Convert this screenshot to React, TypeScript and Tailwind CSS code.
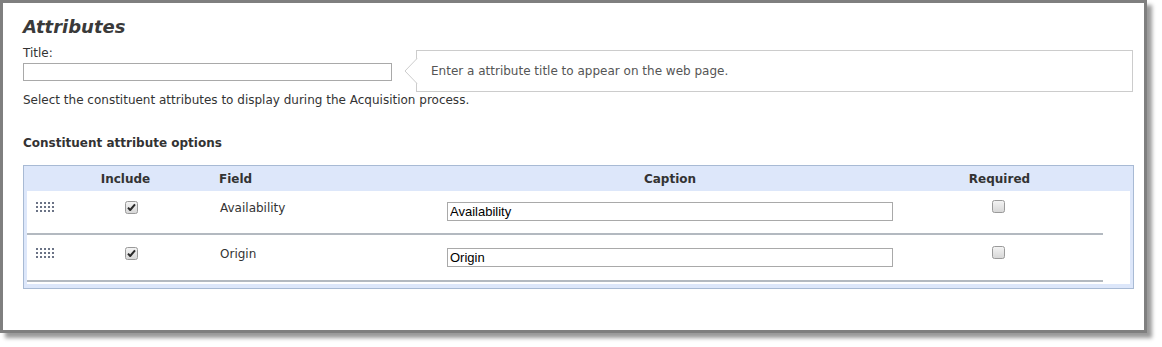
import React from "react"

const verdana = { fontFamily: '"DejaVu Sans", Verdana, sans-serif' }

function Grip() {
  const dots = []
  for (let r = 0; r < 3; r++) {
    for (let c = 0; c < 5; c++) {
      dots.push(<rect key={r + "-" + c} x={c * 4} y={r * 4} width="2" height="2" fill="#6b7386" />)
    }
  }
  return (
    <svg width="18" height="10" viewBox="0 0 18 10">
      {dots}
    </svg>
  )
}

function CheckBox({ checked }: { checked: boolean }) {
  return (
    <svg width="13" height="13" viewBox="0 0 13 13">
      <defs>
        <linearGradient id={checked ? "cbOn" : "cbOff"} x1="0" y1="0" x2="0" y2="1">
          <stop offset="0" stopColor="#f4f4f4" />
          <stop offset="1" stopColor="#d6d6d6" />
        </linearGradient>
      </defs>
      <rect x="0.5" y="0.5" width="12" height="12" rx="2" fill={`url(#${checked ? "cbOn" : "cbOff"})`} stroke="#9a9a9a" />
      {checked && <path d="M3 6.6 L5.2 9 L10 3.4" fill="none" stroke="#2a2a2a" strokeWidth="2" strokeLinejoin="round" />}
    </svg>
  )
}

const rows = [
  { field: "Availability", caption: "Availability", pt: "pt-[9px]", h: "h-[44px]" },
  { field: "Origin", caption: "Origin", pt: "pt-[11px]", h: "h-[47px]" },
]

export default function App() {
  return (
    <div className="w-[1162px] h-[347px] bg-white" style={verdana}>
      <div className="w-[1147px] h-[333px] border-[3px] border-[#7f7f7f] bg-white shadow-[5px_5px_4px_rgba(0,0,0,0.4)] pl-[20px] pt-[13px] text-[#333]">
        <h1 className="text-[18px] leading-[22px] font-bold italic text-[#3a3a3a]">Attributes</h1>
        <div className="mt-[7px] text-[12px] leading-[16px]">Title:</div>
        <div className="relative mt-[2px]">
          <input className="block w-[369px] h-[18px] border border-[#a9a9a9] bg-white" />
          <div className="absolute left-[393px] top-[-13px] w-[717px] h-[42px] border border-[#cccccc] bg-white flex items-center pl-[14px] text-[12px] text-[#555]">
            <svg className="absolute left-[-13px] top-[7px]" width="14" height="26" viewBox="0 0 14 26">
              <path d="M13 0.5 L1 13 L13 25.5" fill="#fff" stroke="#cccccc" />
            </svg>
            Enter a attribute title to appear on the web page.
          </div>
        </div>
        <div className="mt-[11px] text-[12px] leading-[16px]">Select the constituent attributes to display during the Acquisition process.</div>
        <div className="mt-[27px] text-[12px] leading-[16px] font-bold">Constituent attribute options</div>
        <div className="mt-[14px] w-[1111px] border border-[#a8bad4] bg-[#dde7fa]">
          <div className="flex h-[25px] items-center text-[12px] font-bold text-[#333]">
            <div className="w-[52px]" />
            <div className="w-[99px] text-center">Include</div>
            <div className="w-[245px] pl-[44px]">Field</div>
            <div className="w-[500px] text-center">Caption</div>
            <div className="w-[159px] text-center">Required</div>
          </div>
          <div className="mx-[3px] mb-[4px] bg-white pb-[2px]">
            {rows.map((row) => (
              <div key={row.field} className={`flex items-start w-[1076px] border-b-2 border-[#b3b9c0] ${row.pt} ${row.h}`}>
                <div className="w-[49px] pl-[9px] pt-[2px]">
                  <Grip />
                </div>
                <div className="w-[110px] flex justify-center pt-[1px]">
                  <CheckBox checked />
                </div>
                <div className="w-[261px] pl-[34px] text-[12px] leading-[16px] text-[#333]">{row.field}</div>
                <input
                  defaultValue={row.caption}
                  className="mt-[2px] w-[446px] h-[19px] border border-[#a9a9a9] px-[2px] text-[13px] text-black"
                  style={{ fontFamily: '"Liberation Sans", Arial, sans-serif' }}
                />
                <div className="w-[210px] flex justify-center">
                  <CheckBox checked={false} />
                </div>
              </div>
            ))}
          </div>
        </div>
      </div>
    </div>
  )
}
